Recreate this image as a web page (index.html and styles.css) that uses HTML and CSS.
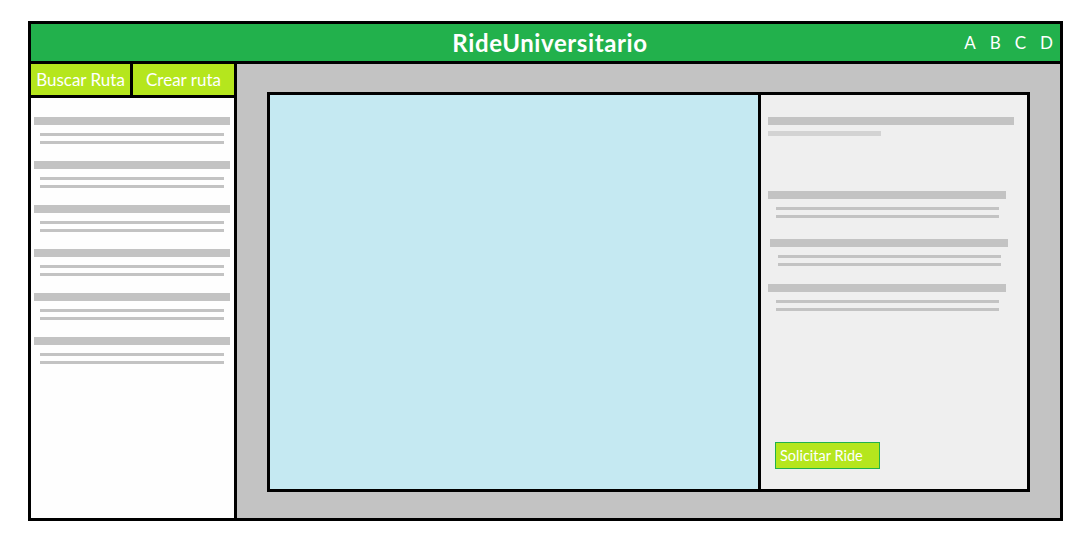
FILE: index.html
```html
<!DOCTYPE html>
<html lang="es">
<head>
<meta charset="utf-8">
<title>RideUniversitario</title>
<link rel="stylesheet" href="styles.css">
</head>
<body>
<div class="page">
  <div class="frame">
    <header class="header">
      <span></span>
      <h1 class="title">RideUniversitario</h1>
      <nav class="nav"><span>A</span><span>B</span><span>C</span><span>D</span></nav>
    </header>
    <div class="body">
      <aside class="sidebar">
        <div class="tabs">
          <div class="tab tab-search">Buscar Ruta</div>
          <div class="tab tab-create">Crear ruta</div>
        </div>
        <div class="list">
          <div class="item"><div class="bar"></div><div class="line"></div><div class="line"></div></div>
          <div class="item"><div class="bar"></div><div class="line"></div><div class="line"></div></div>
          <div class="item"><div class="bar"></div><div class="line"></div><div class="line"></div></div>
          <div class="item"><div class="bar"></div><div class="line"></div><div class="line"></div></div>
          <div class="item"><div class="bar"></div><div class="line"></div><div class="line"></div></div>
          <div class="item"><div class="bar"></div><div class="line"></div><div class="line"></div></div>
        </div>
      </aside>
      <main class="main">
        <div class="card">
          <div class="map"></div>
          <div class="details">
            <div class="d-title"></div>
            <div class="d-sub"></div>
            <div class="d-group g1"><div class="d-bar"></div><div class="d-line"></div><div class="d-line"></div></div>
            <div class="d-group g2"><div class="d-bar"></div><div class="d-line"></div><div class="d-line"></div></div>
            <div class="d-group g3"><div class="d-bar"></div><div class="d-line"></div><div class="d-line"></div></div>
            <button class="btn">Solicitar Ride</button>
          </div>
        </div>
      </main>
    </div>
  </div>
</div>
</body>
</html>
```
FILE: styles.css
```css
* { box-sizing: border-box; }
html, body { margin: 0; padding: 0; background: #ffffff; }
body { font-family: Lato, "Open Sans", "Liberation Sans", sans-serif; }

.page { padding: 21px 0 0 28px; }

.frame {
  width: 1035px;
  height: 500px;
  border: 3px solid #000;
  display: flex;
  flex-direction: column;
}

.header {
  height: 40px;
  flex: none;
  background: #22b14c;
  border-bottom: 3px solid #000;
  display: grid;
  grid-template-columns: 1fr auto 1fr;
  align-items: center;
  color: #fff;
}
.title {
  margin: 0;
  padding-left: 9px;
  font-size: 24px;
  letter-spacing: 0.6px;
  font-weight: 700;
  line-height: 1;
}
.nav {
  justify-self: end;
  display: flex;
  gap: 14px;
  padding-right: 7px;
  font-size: 17px;
  line-height: 1;
}

.body { flex: 1; display: flex; min-height: 0; }

.sidebar {
  width: 206px;
  flex: none;
  border-right: 3px solid #000;
  display: flex;
  flex-direction: column;
  background: #fefefe;
}
.tabs {
  height: 34px;
  flex: none;
  display: flex;
  border-bottom: 3px solid #000;
}
.tab {
  background: #b5e61d;
  color: #fff;
  font-size: 17px;
  display: flex;
  align-items: center;
  justify-content: center;
}
.tab-search { width: 102px; border-right: 3px solid #000; }
.tab-create { flex: 1; }

.list { padding: 19px 4px 0 3px; }
.item { margin-bottom: 17px; }
.bar { height: 8px; background: #c3c3c3; }
.line { height: 3px; background: #c3c3c3; margin: 8px 6px 0; }
.line + .line { margin-top: 5px; }

.main {
  flex: 1;
  background: #c3c3c3;
  padding: 28px 30px 26px 30px;
}
.card {
  height: 400px;
  border: 3px solid #000;
  display: flex;
}
.map { width: 488px; flex: none; background: #c5e9f2; }
.details {
  flex: 1;
  background: #efefef;
  border-left: 3px solid #000;
  display: flex;
  flex-direction: column;
  padding: 22px 0 20px 7px;
}
.d-title { width: 246px; height: 8px; background: #c3c3c3; }
.d-sub { width: 113px; height: 5px; background: #d3d3d3; margin-top: 6px; }
.d-group { width: 238px; }
.g1 { margin-top: 55px; }
.g2 { margin-top: 21px; margin-left: 2px; }
.g3 { margin-top: 18px; }
.d-bar { height: 8px; background: #c3c3c3; }
.d-line { height: 3px; background: #c3c3c3; margin: 8px 7px 0 8px; }
.d-line + .d-line { margin-top: 5px; }

.btn {
  margin-top: auto;
  margin-left: 7px;
  align-self: flex-start;
  width: 105px;
  height: 27px;
  background: #b5e61d;
  border: 1px solid #22b14c;
  color: #fff;
  font-family: Lato, "Open Sans", "Liberation Sans", sans-serif;
  font-size: 14.5px;
  text-align: left;
  padding: 0 0 0 4px;
  cursor: pointer;
}
```
